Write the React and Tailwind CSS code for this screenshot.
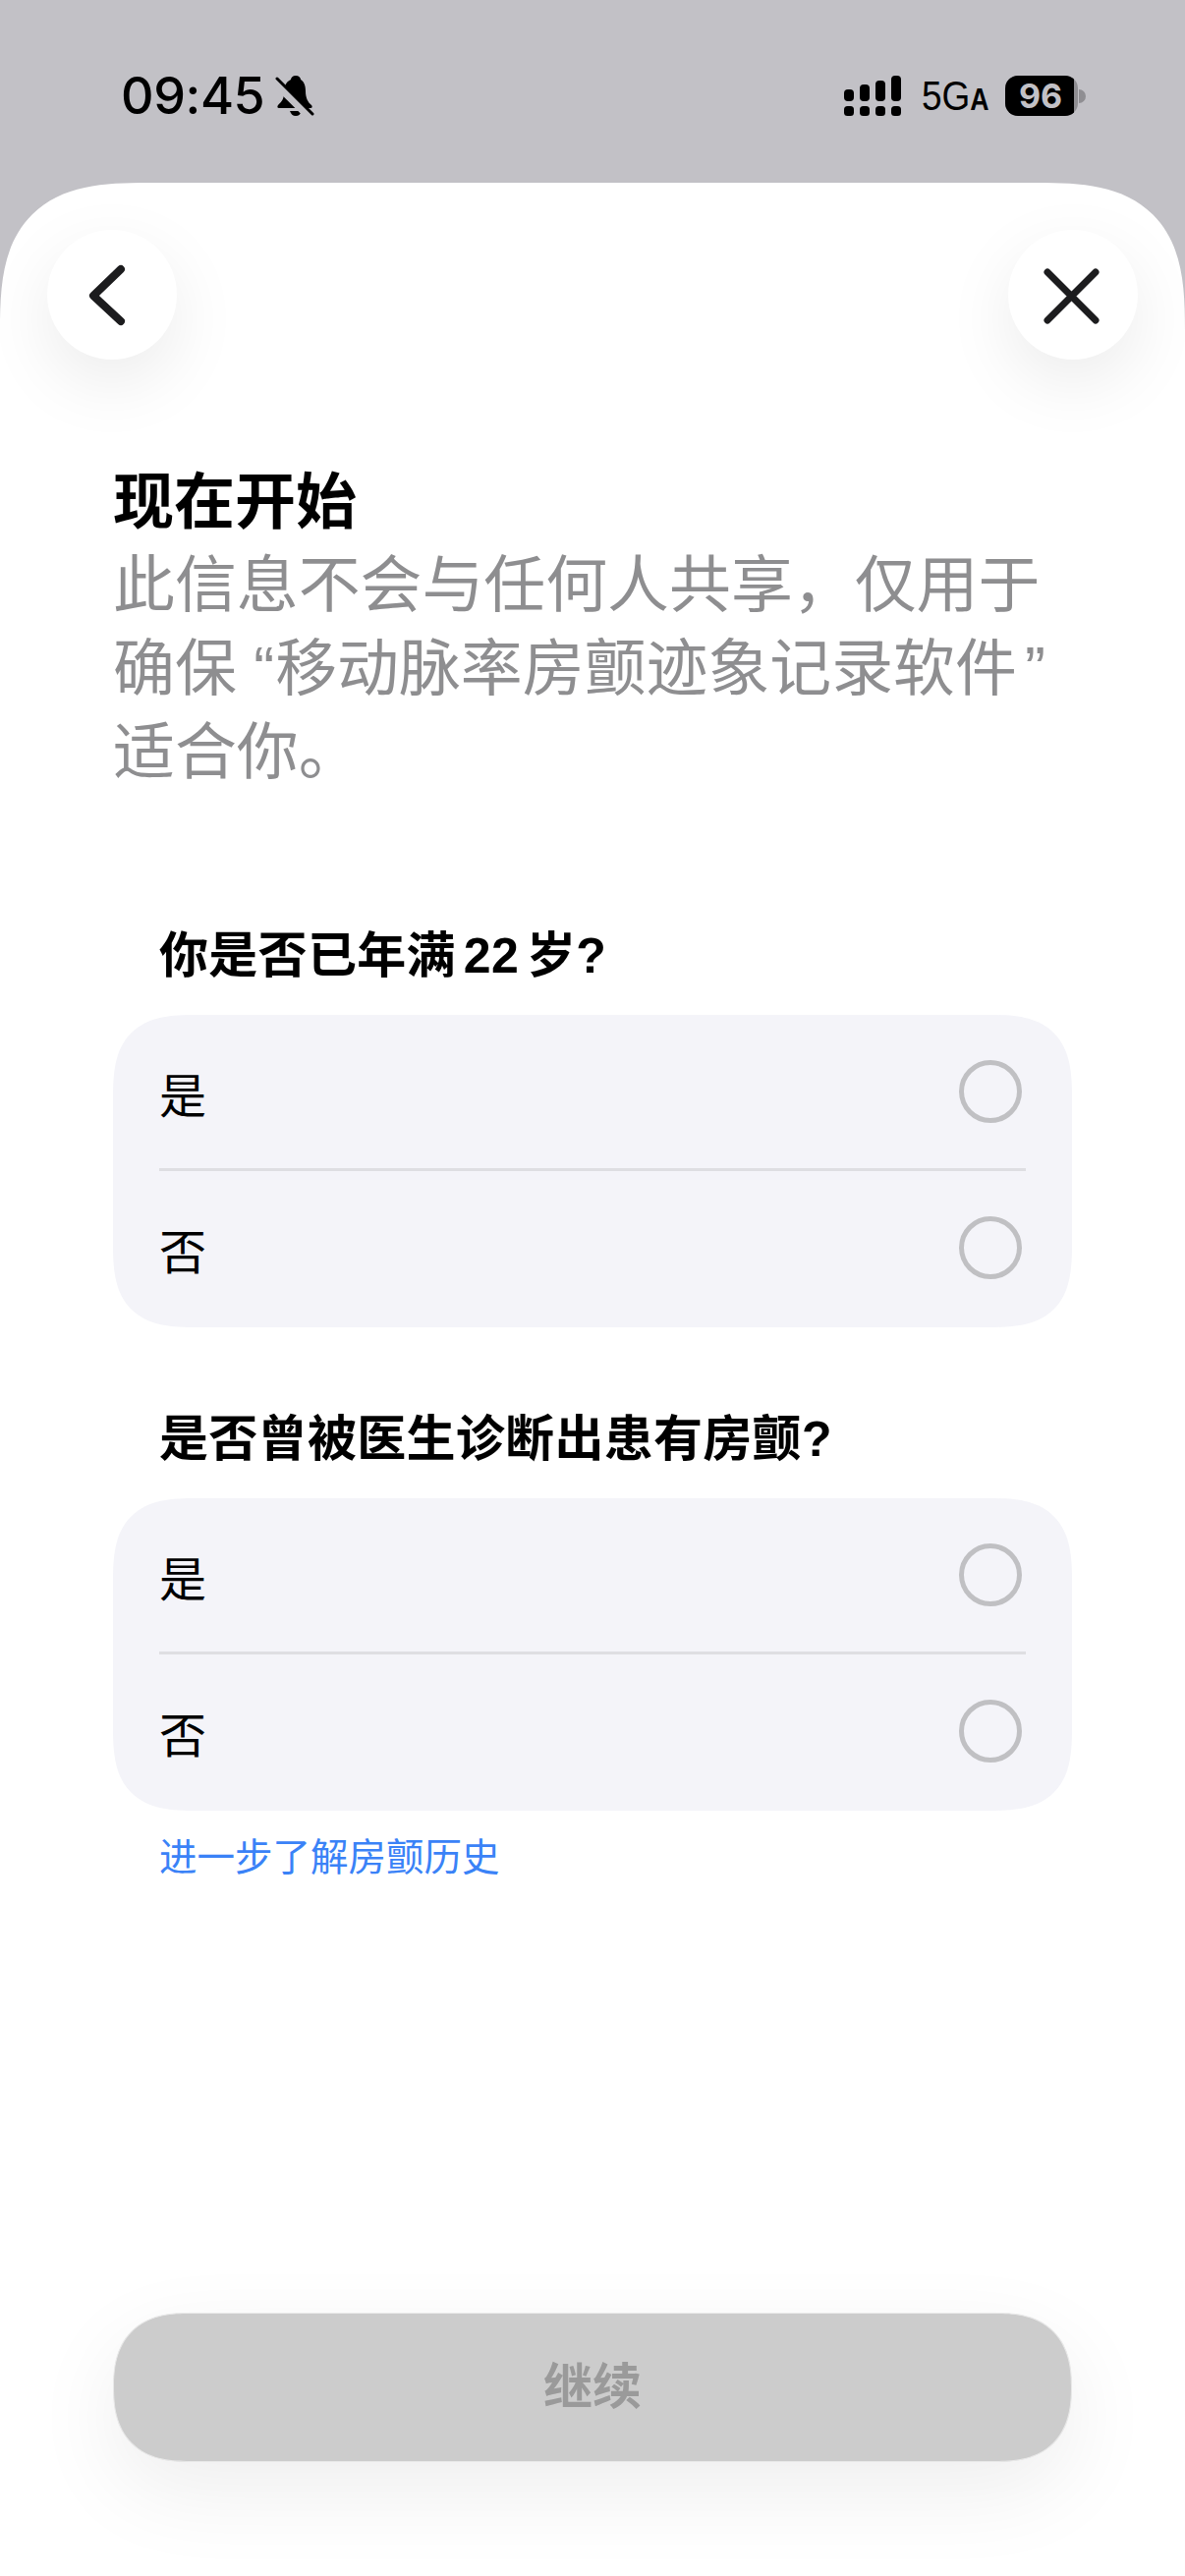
const CJK = '[font-family:"Liberation_Sans","Noto_Sans_CJK_SC",sans-serif]';

function SignalIcon() {
    return (
        <svg width="58" height="41" viewBox="0 0 58 41" fill="#000">
            <rect x="0" y="14" width="10" height="12" rx="4" />
            <rect x="16" y="9" width="10" height="17" rx="4" />
            <rect x="32" y="5" width="10" height="21" rx="4" />
            <rect x="48" y="0" width="10" height="26" rx="4" />
            <rect x="0" y="31" width="10" height="10" rx="3.5" />
            <rect x="16" y="31" width="10" height="10" rx="3.5" />
            <rect x="32" y="31" width="10" height="10" rx="3.5" />
            <rect x="48" y="31" width="10" height="10" rx="3.5" />
        </svg>
    );
}

function BellSlashIcon() {
    return (
        <svg width="40" height="42" viewBox="0 0 40 42" fill="#000">
            <path d="M21 0c-3 0-5 2-5 4C10 7 9 12 9 18c0 6-3 9-6 12-1 1-1 3 1 3h32c2 0 2-2 1-3-4-3-6-8-6-14 0-7-2-10-5-12 0-2-2-4-5-4z" />
            <path d="M15 36h12c-1 3-3 5-6 5s-5-2-6-5z" />
            <path d="M-1 6 35 42" stroke="#c2c1c6" strokeWidth="8" />
            <path d="M2 3 38 39" stroke="#000" strokeWidth="3" strokeLinecap="round" />
        </svg>
    );
}

function StatusBar() {
    return (
        <div className="h-[186px] shrink-0 flex items-start justify-between pl-[123px] pr-[101px] pt-[77px]">
            <div className="flex items-center h-[42px] gap-[11px]">
                <span className="[font-family:Inter,sans-serif] text-[52px] leading-none font-medium text-black tracking-[-0.4px]">09:45</span>
                <BellSlashIcon />
            </div>
            <div className="flex items-center h-[41px]">
                <SignalIcon />
                <span className="ml-[21px] w-[67px] flex items-baseline [font-family:'Liberation_Sans',sans-serif] text-black leading-none origin-left scale-x-[0.86]">
                    <span className="text-[43px]">5G</span>
                    <span className="text-[31px] font-bold">A</span>
                </span>
                <div className="ml-[18px] flex items-center">
                    <div className="w-[74px] h-[41px] rounded-[13px] overflow-hidden bg-[#8f8e92] flex">
                        <div className="w-[70px] h-full bg-black flex items-center justify-center pl-[2px]">
                            <span className="[font-family:Inter,sans-serif] text-[34px] font-bold leading-none text-[#c2c1c6]">96</span>
                        </div>
                    </div>
                    <div className="ml-[1px] w-[7px] h-[14px] rounded-r-full bg-[#8f8e92]" />
                </div>
            </div>
        </div>
    );
}

function CircleButton({ children }) {
    return (
        <button className="w-[132px] h-[132px] rounded-full bg-white shadow-[0_24px_70px_rgba(0,0,0,0.08)]">
            {children}
        </button>
    );
}

function Row({ label }) {
    return (
        <div className="flex-1 flex items-center justify-between pl-[47px] pr-[51px]">
            <span className="text-[48px] leading-none text-black pt-[12px]">{label}</span>
            <span className="w-[64px] h-[64px] rounded-full border-[5px] border-[#c0c0c3]" />
        </div>
    );
}

function Question({ title }) {
    return (
        <div>
            <p className="pl-[47px] text-[50px] leading-[60px] font-bold text-black tracking-[0.3px]">{title}</p>
            <div className="mt-[30px] h-[318px] pb-[3px] rounded-[85px] [corner-shape:superellipse(1.5)] bg-[#f4f4f9] flex flex-col">
                <Row label="是" />
                <div className="mx-[47px] h-[3px] bg-[#dedee2]" />
                <Row label="否" />
            </div>
        </div>
    );
}

export default function App() {
    return (
        <div className={`w-[1206px] h-[2622px] flex flex-col bg-[#c2c1c6] overflow-hidden ${CJK}`}>
            <StatusBar />
            <div className="flex-1 flex flex-col bg-white rounded-t-[150px] [corner-shape:superellipse(1.5)] overflow-hidden pb-[116px]">
                {/* Top buttons */}
                <div className="flex justify-between px-[48px] pt-[48px]">
                    <CircleButton>
                        <svg width="132" height="132" viewBox="0 0 132 132" fill="none" stroke="#1c1c1e" strokeWidth="8" strokeLinecap="round" strokeLinejoin="round">
                            <path d="M75 40 47 67l28 26" />
                        </svg>
                    </CircleButton>
                    <CircleButton>
                        <svg width="132" height="132" viewBox="0 0 132 132" fill="none" stroke="#1c1c1e" strokeWidth="7" strokeLinecap="round">
                            <path d="M40 43 89 92M89 43 40 92" />
                        </svg>
                    </CircleButton>
                </div>

                {/* Intro */}
                <div className="mt-[103px] px-[115px]">
                    <h1 className="text-[62px] leading-[85px] font-bold text-black">现在开始</h1>
                    <div className="-mt-[1px] text-[62.9px] leading-[85px] text-[#8e8e90]">
                        <p>此信息不会与任何人共享，仅用于</p>
                        <p className="whitespace-pre">确保 “<span className="ml-[1px]">移动脉率房颤迹象记录软件</span><span className="ml-[8px]">”</span></p>
                        <p>适合你。</p>
                    </div>
                </div>

                {/* Questions */}
                <div className="mt-[135px] px-[115px] flex flex-col gap-[84px]">
                    <Question title={<>你是否已年满<span className="mx-[8px]">22</span>岁?</>} />
                    <Question title="是否曾被医生诊断出患有房颤?" />
                </div>
                <p className="mt-[23px] pl-[162px] text-[38.5px] leading-[50px] text-[#3a82f7]">进一步了解房颤历史</p>

                {/* Continue */}
                <div className="mt-auto px-[115px]">
                    <button className="w-full h-[152px] pt-[1px] rounded-[76px] [corner-shape:superellipse(1.3)] bg-[#cccccc] border border-[#e8e8e8] shadow-[0_30px_90px_rgba(0,0,0,0.07)] text-[50px] font-bold text-[#9a9a9a]">
                        继续
                    </button>
                </div>
            </div>
        </div>
    );
}
